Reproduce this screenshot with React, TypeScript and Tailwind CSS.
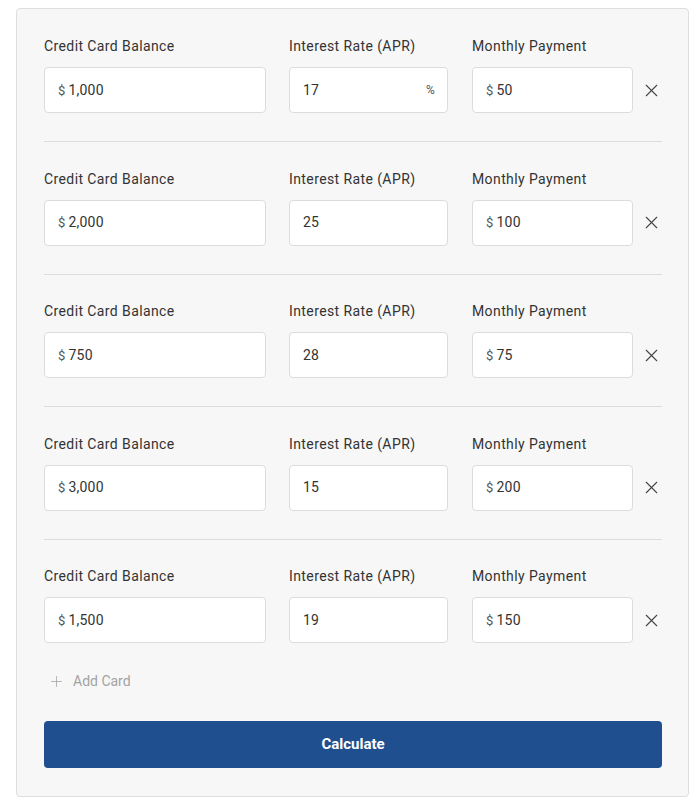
import { X, Plus } from "lucide-react";

type CardRow = {
  balance: string;
  rate: string;
  payment: string;
  showPercent?: boolean;
};

const cards: CardRow[] = [
  { balance: "1,000", rate: "17", payment: "50", showPercent: true },
  { balance: "2,000", rate: "25", payment: "100" },
  { balance: "750", rate: "28", payment: "75" },
  { balance: "3,000", rate: "15", payment: "200" },
  { balance: "1,500", rate: "19", payment: "150" },
];

function Field({ label, children, width }: { label: string; children: React.ReactNode; width: string }) {
  return (
    <div className={`flex flex-col ${width}`}>
      <label className="text-[14px] leading-5 text-[#333] tracking-[0.4px] whitespace-nowrap">{label}</label>
      <div className="mt-[11px] h-[46px] bg-white border border-[#dcdcdc] rounded-[4px] flex items-center px-[13px] text-[14px] text-[#333] tracking-[0.2px]">
        {children}
      </div>
    </div>
  );
}

function Money({ value }: { value: string }) {
  return (
    <span className="flex items-baseline">
      <span className="text-[13px] text-[#555] mr-[3px]">$</span>
      <span>{value}</span>
    </span>
  );
}

export default function App() {
  return (
    <div className="bg-white min-h-[809px] pt-2 pl-4 pr-[11px]" style={{ fontFamily: "Roboto, 'Noto Sans', sans-serif" }}>
      <div className="bg-[#f7f7f7] border border-[#dedede] rounded-[4px] pt-[27px] pl-[27px] pr-[26px] pb-[28px]">
        {cards.map((c, i) => (
          <div key={i}>
            <div className="flex items-end">
              <Field label="Credit Card Balance" width="w-[222px]">
                <Money value={c.balance} />
              </Field>
              <div className="w-[23px]" />
              <Field label="Interest Rate (APR)" width="w-[159px]">
                <span className="flex-1">{c.rate}</span>
                {c.showPercent && <span className="text-[12px] text-[#555] mr-[-1px]">%</span>}
              </Field>
              <div className="w-[24px]" />
              <Field label="Monthly Payment" width="w-[161px]">
                <Money value={c.payment} />
              </Field>
              <button className="h-[46px] flex-1 flex items-center justify-end text-[#444]">
                <X size={21} strokeWidth={1.25} />
              </button>
            </div>
            {i < cards.length - 1 && <div className="h-px bg-[#dcdcdc] mt-[28px] mb-[26.5px]" />}
          </div>
        ))}

        <button className="mt-[28px] ml-[4px] flex items-center gap-[8px] text-[#a3a3a3] text-[14px]">
          <Plus size={17} strokeWidth={1.1} />
          <span>Add Card</span>
        </button>

        <button className="mt-[29px] w-full h-[47px] rounded-[4px] bg-[#1f4f8e] text-white text-[15px] font-bold">
          Calculate
        </button>
      </div>
    </div>
  );
}
